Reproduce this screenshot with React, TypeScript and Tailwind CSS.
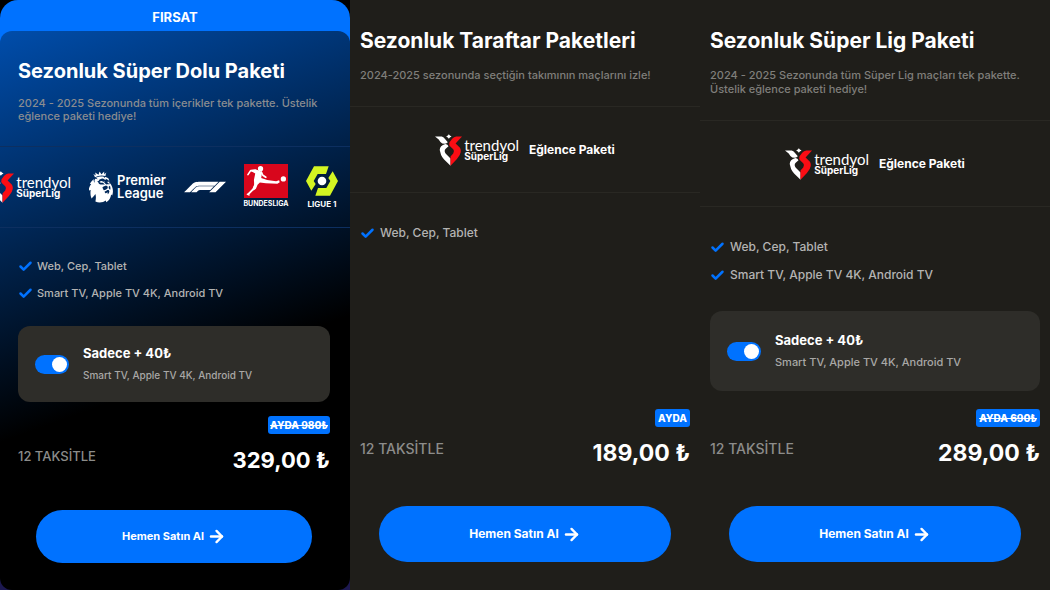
import { ArrowRight, Check } from "lucide-react";
import { SiF1, SiPremierleague } from "react-icons/si";
import clsx from "clsx";

type Plan = {
  title: string;
  description: string;
  devices: string[];
  addOn?: string;
  badge: string;
  struck?: boolean;
  price: string;
  featured?: boolean;
};

const plans: Plan[] = [
  {
    title: "Sezonluk Süper Dolu Paketi",
    description: "2024 - 2025 Sezonunda tüm içerikler tek pakette. Üstelik eğlence paketi hediye!",
    devices: ["Web, Cep, Tablet", "Smart TV, Apple TV 4K, Android TV"],
    addOn: "Sadece + 40₺",
    badge: "AYDA 980₺",
    struck: true,
    price: "329,00 ₺",
    featured: true,
  },
  {
    title: "Sezonluk Taraftar Paketleri",
    description: "2024-2025 sezonunda seçtiğin takımının maçlarını izle!",
    devices: ["Web, Cep, Tablet"],
    badge: "AYDA",
    price: "189,00 ₺",
  },
  {
    title: "Sezonluk Süper Lig Paketi",
    description: "2024 - 2025 Sezonunda tüm Süper Lig maçları tek pakette. Üstelik eğlence paketi hediye!",
    devices: ["Web, Cep, Tablet", "Smart TV, Apple TV 4K, Android TV"],
    addOn: "Sadece + 40₺",
    badge: "AYDA 690₺",
    struck: true,
    price: "289,00 ₺",
  },
];

function SuperLigLogo() {
  return (
    <div className="flex shrink-0 items-center gap-[2px]">
      <svg viewBox="0 -4 80 94" className="h-8 w-[27px]" aria-hidden="true">
        <path fill="#fff" d="M0 3H20Q25 4 29 10L38 20 33 24Q22 26 16 19L11 12Z" />
        <path fill="#fff" d="M41 -4 44 0 49 3 44 6 41 10 38 6 33 3 38 0Z" />
        <path fill="#fff" d="M31 25Q14 30 14 43L18 58Q21 65 27 71L46 90V68L32 54Q26 46 31 40L40 32Q38 26 31 25Z" />
        <path fill="#fb0d14" d="M80 3H63Q56 4 51 10L43 20Q40 27 46 33L54 41Q59 47 54 53L46 62V90L65 70Q75 59 76 50Q78 39 71 33L61 24Z" />
      </svg>
      <div className="font-['Lato','Inter',sans-serif] text-white">
        <div className="text-[15px] leading-[12px]">trendyol</div>
        <div className="font-['Inter',sans-serif] text-[10px] leading-[10px] font-bold">SüperLig</div>
      </div>
    </div>
  );
}

function PremierLeagueLogo() {
  return (
    <div className="flex shrink-0 items-center gap-[2px] text-white">
      <SiPremierleague viewBox="3 0 20 24" className="h-8 w-[26px]" aria-hidden="true" />
      <div className="text-[13px] leading-[13px] font-semibold">
        Premier
        <br />
        League
      </div>
    </div>
  );
}

function BundesligaLogo() {
  return (
    <div className="flex w-11 shrink-0 flex-col items-center text-white">
      <svg viewBox="0 0 133 105" className="w-full bg-[#d8061c]" aria-hidden="true">
        <g fill="none" stroke="#fff" strokeLinejoin="round" strokeLinecap="round">
          <path strokeWidth="5" d="M12 32 20 20 36 20" />
          <path strokeWidth="5" d="M52 24 57 34 66 40" />
          <path strokeWidth="6" d="M36 50 34 64 28 76 13 91" />
        </g>
        <path fill="#fff" d="M21 18 34 16 45 20 55 25 53 36 52 42 70 48 97 52 106 49 108 55 101 60 66 58 48 56 41 63 36 75 29 80 26 76 31 61 30 48 34 29 22 22Z" />
        <path fill="#fff" d="M9 89 18 93 16 96 8 93Z" />
        <circle fill="#fff" cx="50" cy="14" r="8" />
        <circle fill="#fff" cx="119" cy="45" r="8" />
      </svg>
      <div className="text-[7px] leading-[12px] font-bold">BUNDESLIGA</div>
    </div>
  );
}

function Ligue1Logo() {
  return (
    <div className="flex w-8 shrink-0 flex-col items-center gap-1 text-white">
      <svg viewBox="0 0 96 90" className="w-full" aria-hidden="true">
        <path fill="#d4f522" d="M68 1H24L0 45 16 74 29 54 23 45 35 24H60Z" />
        <path fill="#d4f522" d="M28 89H72L96 45 80 16 67 36 73 45 61 66H36Z" />
        <circle fill="#fff" cx="48" cy="45" r="13" />
      </svg>
      <div className="text-[8px] leading-[9px] font-bold whitespace-nowrap">LIGUE 1</div>
    </div>
  );
}

function PlanBody({ plan }: { plan: Plan }) {
  const { featured } = plan;
  const inset = featured ? "pl-[18px] pr-5" : "px-[10px]";
  const divider = featured ? "border-[#0d2f60]" : "border-[#292823]";

  return (
    <>
      <div className={clsx(inset, featured ? "pt-[26px] pb-[23px]" : "pt-[27px] pb-6")}>
        <h2 className={clsx("leading-7 font-bold whitespace-nowrap text-white", featured ? "text-xl" : "text-[21px]")}>
          {plan.title}
        </h2>
        <p
          className={clsx(
            "text-[11px] font-medium",
            featured ? "mt-3 leading-[13px] text-[#8a8c90]" : "mt-[13px] leading-[14px] text-[#7f7e7b]",
          )}
        >
          {plan.description}
        </p>
      </div>

      <div
        className={clsx(
          "flex items-center overflow-hidden border-y",
          divider,
          featured ? "h-[82px] justify-end gap-[18px] pr-3" : "h-[87px] justify-center gap-[10px]",
        )}
      >
        <SuperLigLogo />
        {featured ? (
          <>
            <PremierLeagueLogo />
            <SiF1 size={42} className="shrink-0 text-white" aria-label="F1" />
            <BundesligaLogo />
            <Ligue1Logo />
          </>
        ) : (
          <span className="text-xs font-bold text-white">Eğlence Paketi</span>
        )}
      </div>

      <ul className={clsx("flex flex-col", inset, featured ? "gap-[11px] pt-[30px]" : "gap-3 pt-8")}>
        {plan.devices.map((device) => (
          <li
            key={device}
            className={clsx(
              "flex items-center leading-4 font-medium text-[#b4b4b3]",
              featured ? "gap-1 text-[11px]" : "gap-[5px] text-xs",
            )}
          >
            <Check size={15} strokeWidth={4} className="text-[#0072ff]" />
            {device}
          </li>
        ))}
      </ul>

      {plan.addOn && (
        <div className={clsx(inset, featured ? "mt-[25px]" : "mt-7")}>
          <label
            className={clsx(
              "flex items-center gap-[14px] rounded-xl bg-[#2e2d29] px-[17px]",
              featured ? "h-[76px]" : "h-20",
            )}
          >
            <input
              type="checkbox"
              defaultChecked
              className="flex h-[19px] w-[34px] shrink-0 appearance-none items-center rounded-full bg-[#56554f] px-[2px] before:size-[15px] before:rounded-full before:bg-white checked:justify-end checked:bg-[#0072ff]"
            />
            <span className="flex flex-col gap-[6px]">
              <span className="text-[13px] leading-4 font-bold text-white">{plan.addOn}</span>
              <span className={clsx("leading-4 font-medium text-[#a9a8a6]", featured ? "text-[10px]" : "text-[11px]")}>
                Smart TV, Apple TV 4K, Android TV
              </span>
            </span>
          </label>
        </div>
      )}

      <div className={clsx("mt-auto flex flex-col", inset, featured ? "pb-[27px]" : "pb-7")}>
        <span
          className={clsx(
            "self-end rounded-[3px] bg-[#0072ff] text-[10px] leading-[18px] font-extrabold text-white",
            featured ? "px-[2px]" : "px-[3px]",
            plan.struck && "line-through",
          )}
        >
          {plan.badge}
        </span>
        <div className="mt-[10px] flex items-start justify-between">
          <span className={clsx("leading-6 font-medium text-[#8c8c8a]", featured ? "text-[13px]" : "text-sm")}>
            12 TAKSİTLE
          </span>
          <span className={clsx("leading-8 font-bold text-white", featured ? "text-[22px]" : "text-[23px]")}>
            {plan.price}
          </span>
        </div>
        <button
          type="button"
          className={clsx(
            "flex items-center justify-center gap-[3px] rounded-full bg-[#0072ff] font-bold text-white",
            featured ? "mx-[18px] mt-[34px] h-[53px] text-[11px]" : "mx-[19px] mt-[37px] h-[56px] text-xs",
          )}
        >
          Hemen Satın Al
          <ArrowRight size={19} strokeWidth={3} />
        </button>
      </div>
    </>
  );
}

function PlanCard({ plan }: { plan: Plan }) {
  if (!plan.featured) {
    return (
      <section className="flex flex-col bg-[#1f1e1a]">
        <PlanBody plan={plan} />
      </section>
    );
  }

  return (
    <section className="flex flex-col rounded-t-[18px] bg-linear-to-b from-[#0072ff] from-50% to-[#1c1850] to-50%">
      <div className="pt-[3px] text-center text-[13px] leading-[28px] font-bold text-white">FIRSAT</div>
      <div className="flex grow flex-col rounded-xl bg-[linear-gradient(160deg,#004dab_0%,#000_60%)]">
        <PlanBody plan={plan} />
      </div>
    </section>
  );
}

export default function App() {
  return (
    <main className="grid min-h-screen grid-cols-3 bg-black font-['Inter',sans-serif]">
      {plans.map((plan) => (
        <PlanCard key={plan.title} plan={plan} />
      ))}
    </main>
  );
}
